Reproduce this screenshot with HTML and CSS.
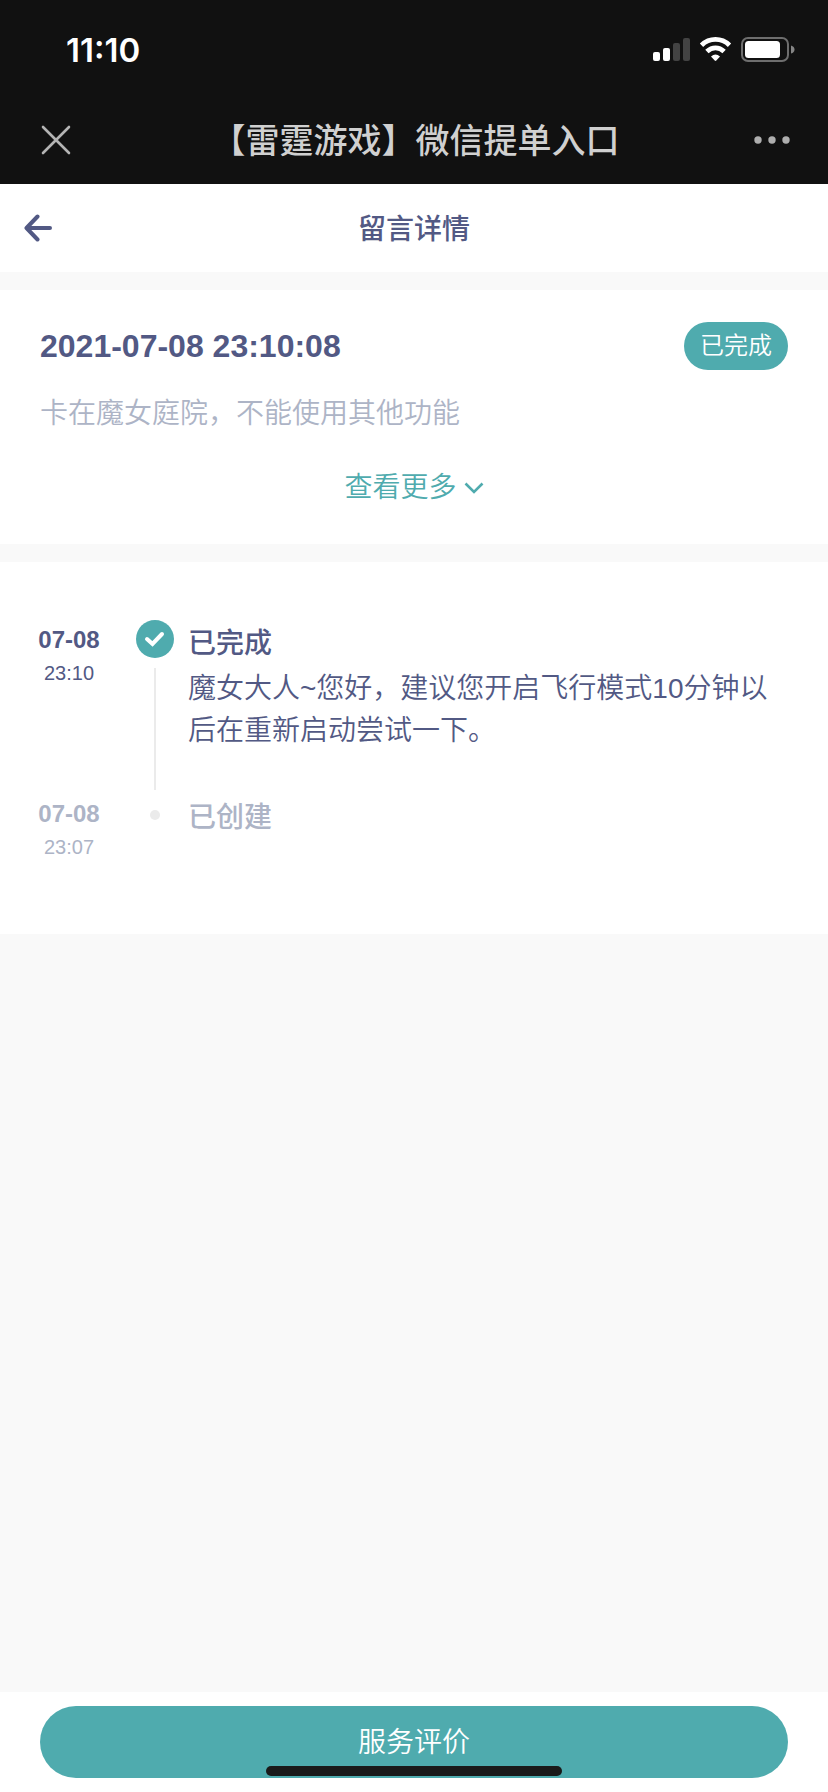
FILE: index.html
```html
<!DOCTYPE html>
<html lang="zh-CN">
<head>
<meta charset="utf-8">
<meta name="viewport" content="width=device-width, initial-scale=1">
<title>留言详情</title>
<link rel="stylesheet" href="styles.css">
</head>
<body>
<div class="page">
  <div class="chrome">
    <div class="status">
      <span class="clock">11:10</span>
      <svg class="indicators" width="142" height="26" viewBox="0 0 142 26" aria-hidden="true">
        <g fill="#fff">
          <rect x="0" y="15" width="7" height="9" rx="2"/>
          <rect x="10" y="11" width="7" height="13" rx="2"/>
        </g>
        <g fill="#434343">
          <rect x="20" y="6" width="7" height="18" rx="2"/>
          <rect x="30" y="1" width="7" height="23" rx="2"/>
        </g>
        <g fill="none" stroke="#fff" stroke-width="4.800">
          <path d="M48.500 8.200C56.500 .5 68.500 .5 76.500 8.200"/>
          <path d="M53.900 14.400C59 9.600 66 9.600 71.100 14.400"/>
        </g>
        <path d="M58 19.400Q62.500 15.400 67 19.400L63.300 23.500Q62.500 24.300 61.700 23.500Z" fill="#fff"/>
        <rect x="89" y="1" width="46" height="23" rx="6" fill="none" stroke="#6e6e6e" stroke-width="2"/>
        <rect x="92" y="4" width="35" height="17" rx="3.500" fill="#fff"/>
        <path d="M138 8.500Q141.500 9.500 141.500 12.500T138 16.500Z" fill="#858585"/>
      </svg>
    </div>
    <div class="nav">
      <button class="icon-button" aria-label="关闭">
        <svg width="30" height="30" viewBox="0 0 30 30"><path d="M2 2L28 28M28 2L2 28" fill="none" stroke="#b4b4b4" stroke-width="2.600" stroke-linecap="round"/></svg>
      </button>
      <span class="nav-title">【雷霆游戏】微信提单入口</span>
      <button class="icon-button nav-more" aria-label="更多">
        <svg width="36" height="8" viewBox="0 0 36 8" fill="#aeaeae"><circle cx="4" cy="4" r="3.700"/><circle cx="18" cy="4" r="3.700"/><circle cx="32" cy="4" r="3.700"/></svg>
      </button>
    </div>
  </div>

  <header class="header">
    <button class="icon-button" aria-label="返回">
      <svg width="28" height="28" viewBox="0 0 28 28"><path d="M13.500 2.500L2.500 14L13.500 25.500M3 14H26" fill="none" stroke="#525984" stroke-width="4" stroke-linecap="round" stroke-linejoin="round"/></svg>
    </button>
    <h1 class="header-title">留言详情</h1>
  </header>

  <main class="main">
    <section class="card summary">
      <div class="summary-top">
        <h2 class="summary-date">2021-07-08 23:10:08</h2>
        <span class="badge">已完成</span>
      </div>
      <p class="summary-text">卡在魔女庭院，不能使用其他功能</p>
      <button class="more">查看更多
        <svg width="20" height="12" viewBox="0 0 20 12"><path d="M1.500 1.500L10 10L18.500 1.500" fill="none" stroke="#4fabae" stroke-width="2.600"/></svg>
      </button>
    </section>

    <ol class="card timeline">
      <li class="event">
        <div class="when"><span class="day">07-08</span><span class="time">23:10</span></div>
        <div class="marker">
          <svg width="38" height="38" viewBox="0 0 38 38"><circle cx="19" cy="19" r="19" fill="#4fabae"/><path d="M11 19L16.500 24L26 14" fill="none" stroke="#fff" stroke-width="4" stroke-linecap="round"/></svg>
          <span class="line"></span>
        </div>
        <div class="what">
          <h3 class="event-title">已完成</h3>
          <p class="event-text">魔女大人~您好，建议您开启飞行模式10分钟以后在重新启动尝试一下。</p>
        </div>
      </li>
      <li class="event past">
        <div class="when"><span class="day">07-08</span><span class="time">23:07</span></div>
        <div class="marker"><span class="dot"></span></div>
        <div class="what"><h3 class="event-title">已创建</h3></div>
      </li>
    </ol>
  </main>

  <footer class="footer">
    <button class="submit">服务评价</button>
    <span class="home-bar"></span>
  </footer>
</div>
</body>
</html>
```
FILE: styles.css
```css
* { box-sizing: border-box; }

body {
  margin: 0;
  font-family: "Liberation Sans", "Noto Sans CJK SC", sans-serif;
  font-size: 28px;
  font-weight: 350;
  color: #525984;
  background: #f9f9f9;
}

h1, h2, h3, p, ol { margin: 0; padding: 0; font-size: 28px; }
ol { list-style: none; }
button { border: 0; padding: 0; background: none; font: inherit; color: inherit; }
svg { display: block; flex: none; }

.page { display: flex; flex-direction: column; min-height: 100vh; }

.chrome { background: #111; }
.status {
  display: flex;
  align-items: center;
  justify-content: space-between;
  height: 96px;
  padding: 4px 33px 0 66px;
}
.clock {
  font-family: Inter, sans-serif;
  font-size: 33px;
  font-weight: 600;
  color: #fff;
}

.nav, .header {
  display: grid;
  grid-template-columns: 1fr auto 1fr;
  align-items: center;
  height: 88px;
}
.nav { padding: 0 38px 0 41px; }
.nav-title { padding-bottom: 4px; font-size: 34px; font-weight: 500; color: #d0d0d0; }
.icon-button { justify-self: start; }
.nav-more { justify-self: end; }

.header { padding: 0 24px; background: #fff; }
.header-title { grid-column: 2; padding-bottom: 2px; font-weight: 500; }

.main { flex: 1; display: flex; flex-direction: column; gap: 18px; padding-top: 18px; }
.card { background: #fff; }

.summary {
  display: flex;
  flex-direction: column;
  padding: 32px 40px 36px;
}
.summary-top { display: flex; align-items: center; justify-content: space-between; }
.summary-date { font-size: 32px; font-weight: 700; }
.badge {
  padding: 0 16px;
  border-radius: 24px;
  font-size: 24px;
  line-height: 48px;
  color: #fff;
  background: #4fabae;
}
.summary-text { margin-top: 24px; line-height: 40px; color: #adb4c6; }
.more {
  display: flex;
  align-items: center;
  align-self: center;
  gap: 7px;
  margin-top: 34px;
  line-height: 40px;
  color: #4fabae;
}

.timeline { padding: 58px 40px 70px 38px; }
.event {
  display: grid;
  grid-template-columns: 62px 38px 1fr;
  column-gap: 36px;
  min-height: 70px;
}
.event:not(:last-child) { min-height: 174px; }
.when { display: flex; flex-direction: column; align-items: center; }
.day { font-size: 24px; font-weight: 700; line-height: 40px; }
.time { font-size: 20px; line-height: 26px; }
.marker { display: flex; flex-direction: column; align-items: center; }
.line { flex: 1; width: 2px; margin: 10px 0 4px; background: #ebebeb; }
.dot { width: 10px; height: 10px; margin-top: 16px; border-radius: 50%; background: #ebebeb; }
.what { margin-left: -22px; }
.event-title { font-weight: 500; line-height: 48px; }
.event-text { line-height: 42px; }
.past { color: #adb4c6; }

.footer { position: relative; padding: 14px 40px; background: #fff; }
.submit {
  display: block;
  width: 100%;
  padding-top: 2px;
  border-radius: 36px;
  line-height: 70px;
  color: #fff;
  background: #4fabae;
}
.home-bar {
  position: absolute;
  left: 50%;
  bottom: 16px;
  width: 296px;
  height: 10px;
  margin-left: -148px;
  border-radius: 5px;
  background: #1a1a1a;
}
```
